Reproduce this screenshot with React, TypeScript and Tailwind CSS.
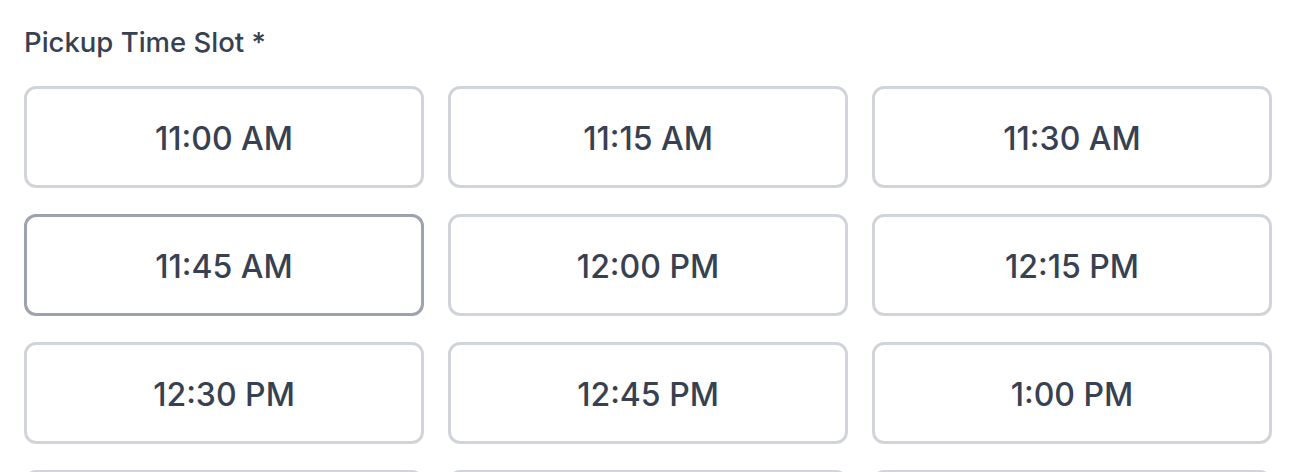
import { useState } from 'react'

const slots = [
  '11:00 AM', '11:15 AM', '11:30 AM',
  '11:45 AM', '12:00 PM', '12:15 PM',
  '12:30 PM', '12:45 PM', '1:00 PM',
  '1:15 PM', '1:30 PM', '1:45 PM',
]

export default function App() {
  const [selected, setSelected] = useState('11:45 AM')

  return (
    <div className="bg-white px-6 pt-[22px] pb-6" style={{ fontFamily: 'Inter, "Noto Sans", sans-serif' }}>
      <label className="block text-[27.5px] leading-[40px] font-medium text-[#374151] mb-6">
        Pickup Time Slot *
      </label>
      <div className="grid grid-cols-3 gap-x-6 gap-y-[26px]">
        {slots.map((slot) => (
          <button
            key={slot}
            type="button"
            onClick={() => setSelected(slot)}
            className={
              'h-[102px] pt-1 rounded-[12px] border-[3px] bg-white text-[32px] font-medium text-[#374151] ' +
              (selected === slot ? 'border-[#9ca3af]' : 'border-[#d1d5db]')
            }
          >
            {slot}
          </button>
        ))}
      </div>
    </div>
  )
}
